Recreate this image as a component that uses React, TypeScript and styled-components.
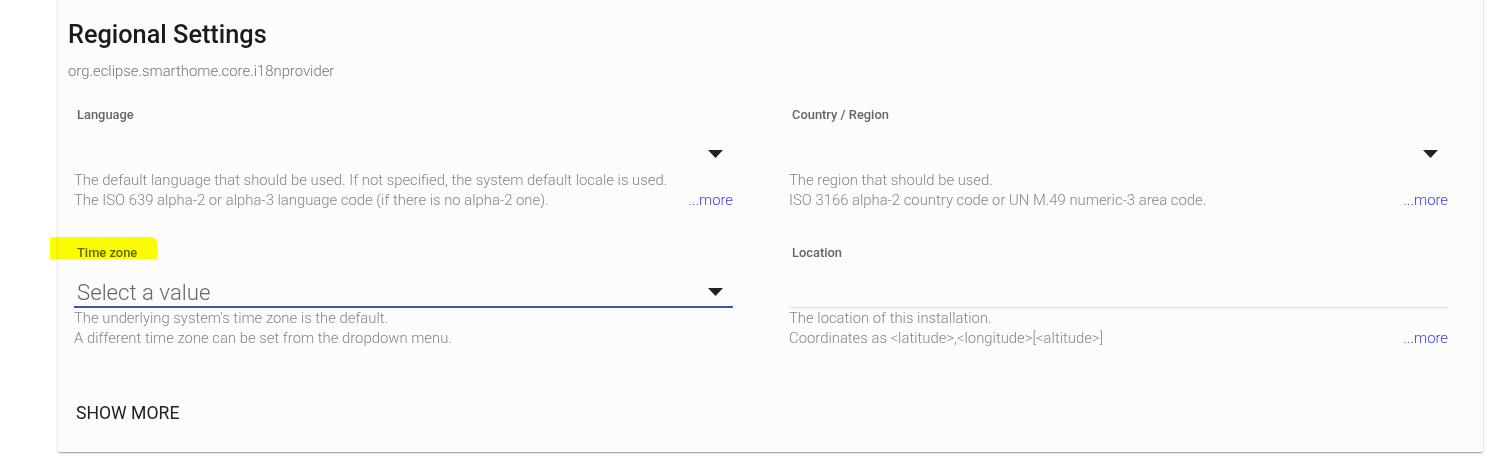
import React from "react";
import styled, { createGlobalStyle } from "styled-components";

const Global = createGlobalStyle`
  html, body { margin: 0; padding: 0; background: #ffffff; }
  body { font-family: Roboto, "Noto Sans", Arial, sans-serif; overflow: hidden; }
  * { box-sizing: border-box; }
`;

const Page = styled.div`
  width: 1489px;
  height: 462px;
  padding-left: 58px;
  padding-right: 6px;
`;

const Card = styled.section`
  position: relative;
  margin-top: -6px;
  background: #fcfcfc;
  border-radius: 2px;
  box-shadow: 0 1px 3px rgba(0, 0, 0, 0.2), 0 1px 1px rgba(0, 0, 0, 0.14), 0 2px 1px -1px rgba(0, 0, 0, 0.12);
  padding: 25px 35px 21px 10px;
`;

const Title = styled.h2`
  margin: 0;
  font-size: 25.3px;
  line-height: 32px;
  font-weight: 500;
  color: #1a1a1a;
`;

const Subtitle = styled.div`
  margin-top: 10px;
  font-size: 14.85px;
  line-height: 20px;
  font-weight: 300;
  color: #757575;
`;

const Grid = styled.div`
  margin-top: 26px;
  margin-left: 6px;
  display: grid;
  grid-template-columns: 1fr 1fr;
  column-gap: 56px;
  row-gap: 35px;
`;

const Field = styled.div`
  position: relative;
  display: flex;
  flex-direction: column;
`;

const Label = styled.label`
  display: block;
  padding-left: 3px;
  font-size: 12.9px;
  line-height: 16px;
  height: 16px;
  font-weight: 500;
  color: #666666;
`;

const Control = styled.div<{ $line: "none" | "active" | "plain" }>`
  height: 47px;
  display: flex;
  align-items: flex-end;
  justify-content: space-between;
  border-bottom: ${(p) =>
    p.$line === "active" ? "2px solid #3f51b5" : p.$line === "plain" ? "1px solid #dddddd" : "2px solid transparent"};
  padding: 0 10px 0 3px;
`;

const Value = styled.span`
  font-size: 22.2px;
  line-height: 28px;
  font-weight: 300;
  color: #666666;
`;

const Arrow = styled.svg`
  width: 15px;
  height: 8px;
  margin-bottom: 10px;
  flex: none;
`;

const Hint = styled.div`
  display: flex;
  justify-content: space-between;
  align-items: flex-end;
  font-size: 14.85px;
  line-height: 20px;
  font-weight: 300;
  color: #858585;
`;

const HintText = styled.div``;

const More = styled.a`
  color: #3c3cf0;
  font-weight: 300;
  cursor: pointer;
`;

const Highlight = styled.div`
  position: absolute;
  left: -24px;
  top: -8px;
  width: 107px;
  height: 22px;
  background: #ffff00;
  mix-blend-mode: multiply;
  border-radius: 3px 6px 1px 1px;
  filter: blur(0.6px);
  pointer-events: none;
`;

const ShowMore = styled.button`
  margin-top: 47px;
  margin-left: 6px;
  height: 36px;
  padding: 0 2px;
  background: none;
  border: none;
  font-family: Roboto, "Noto Sans", Arial, sans-serif;
  font-size: 17.6px;
  font-weight: 400;
  color: #212121;
  text-transform: uppercase;
  cursor: pointer;
`;

const DropArrow = () => (
  <Arrow viewBox="0 0 15 8">
    <polygon points="0,0 15,0 7.5,8" fill="#212121" />
  </Arrow>
);

type FieldDef = {
  label: string;
  line: "none" | "active" | "plain";
  value?: string;
  arrow: boolean;
  hint: [string, string];
  more: boolean;
  highlight?: boolean;
};

const fields: FieldDef[] = [
  {
    label: "Language",
    line: "none",
    arrow: true,
    hint: [
      "The default language that should be used. If not specified, the system default locale is used.",
      "The ISO 639 alpha-2 or alpha-3 language code (if there is no alpha-2 one).",
    ],
    more: true,
  },
  {
    label: "Country / Region",
    line: "none",
    arrow: true,
    hint: ["The region that should be used.", "ISO 3166 alpha-2 country code or UN M.49 numeric-3 area code."],
    more: true,
  },
  {
    label: "Time zone",
    line: "active",
    value: "Select a value",
    arrow: true,
    hint: ["The underlying system's time zone is the default.", "A different time zone can be set from the dropdown menu."],
    more: false,
    highlight: true,
  },
  {
    label: "Location",
    line: "plain",
    arrow: false,
    hint: ["The location of this installation.", "Coordinates as <latitude>,<longitude>[<altitude>]"],
    more: true,
  },
];

export default function App() {
  return (
    <Page>
      <Global />
      <Card>
        <Title>Regional Settings</Title>
        <Subtitle>org.eclipse.smarthome.core.i18nprovider</Subtitle>
        <Grid>
          {fields.map((f) => (
            <Field key={f.label}>
              {f.highlight && <Highlight />}
              <Label>{f.label}</Label>
              <Control $line={f.line}>
                <Value>{f.value ?? ""}</Value>
                {f.arrow && <DropArrow />}
              </Control>
              <Hint>
                <HintText>
                  {f.hint[0]}
                  <br />
                  {f.hint[1]}
                </HintText>
                {f.more && <More>...more</More>}
              </Hint>
            </Field>
          ))}
        </Grid>
        <ShowMore>Show more</ShowMore>
      </Card>
    </Page>
  );
}
